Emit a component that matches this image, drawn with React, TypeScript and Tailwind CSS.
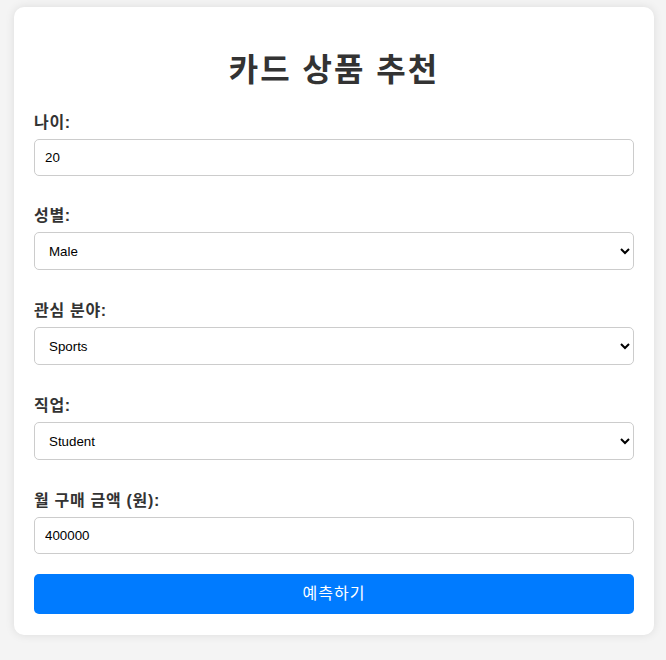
import React from 'react';

const ko = { fontFamily: '"Liberation Sans", "Noto Sans CJK KR", sans-serif' };

const labelCls = 'block mb-1 text-base font-bold leading-6 tracking-[0.7px] text-[#333]';
const inputCls =
  'block w-full h-[37px] px-[10px] border border-[#ccc] rounded-[5px] bg-white text-[13.33px] text-black outline-none';
const selectCls =
  'block w-full h-[38px] px-[10px] border border-[#ccc] rounded-[5px] bg-white text-[13.33px] text-black outline-none';

function Field({ label, className, children }: { label: string; className: string; children: React.ReactNode }) {
  return (
    <div className={className}>
      <label className={labelCls}>{label}</label>
      {children}
    </div>
  );
}

export default function App() {
  return (
    <main className="min-h-[660px] bg-[#f4f4f4] pt-[7px] pb-6" style={ko}>
      <div className="ml-[14px] w-[640px] rounded-[10px] bg-white p-5 pb-[21px] shadow-[0_0_10px_rgba(0,0,0,0.1)]">
        <h1 className="mt-[23px] mb-[21px] text-center text-[32px] font-bold leading-10 tracking-[2px] text-[#333]">
          카드 상품 추천
        </h1>

        <Field label="나이:" className="mb-[28px]">
          <input type="number" defaultValue="20" className={inputCls} />
        </Field>

        <Field label="성별:" className="mb-[29px]">
          <select defaultValue="Male" className={selectCls}>
            <option>Male</option>
            <option>Female</option>
          </select>
        </Field>

        <Field label="관심 분야:" className="mb-[29px]">
          <select defaultValue="Sports" className={selectCls}>
            <option>Sports</option>
            <option>Travel</option>
            <option>Shopping</option>
          </select>
        </Field>

        <Field label="직업:" className="mb-[29px]">
          <select defaultValue="Student" className={selectCls}>
            <option>Student</option>
            <option>Office Worker</option>
          </select>
        </Field>

        <Field label="월 구매 금액 (원):" className="mb-5">
          <input type="number" defaultValue="400000" className={inputCls} />
        </Field>

        <button className="block w-full h-10 rounded-[5px] bg-[#007bff] text-base tracking-[1px] text-white">
          예측하기
        </button>
      </div>
    </main>
  );
}
